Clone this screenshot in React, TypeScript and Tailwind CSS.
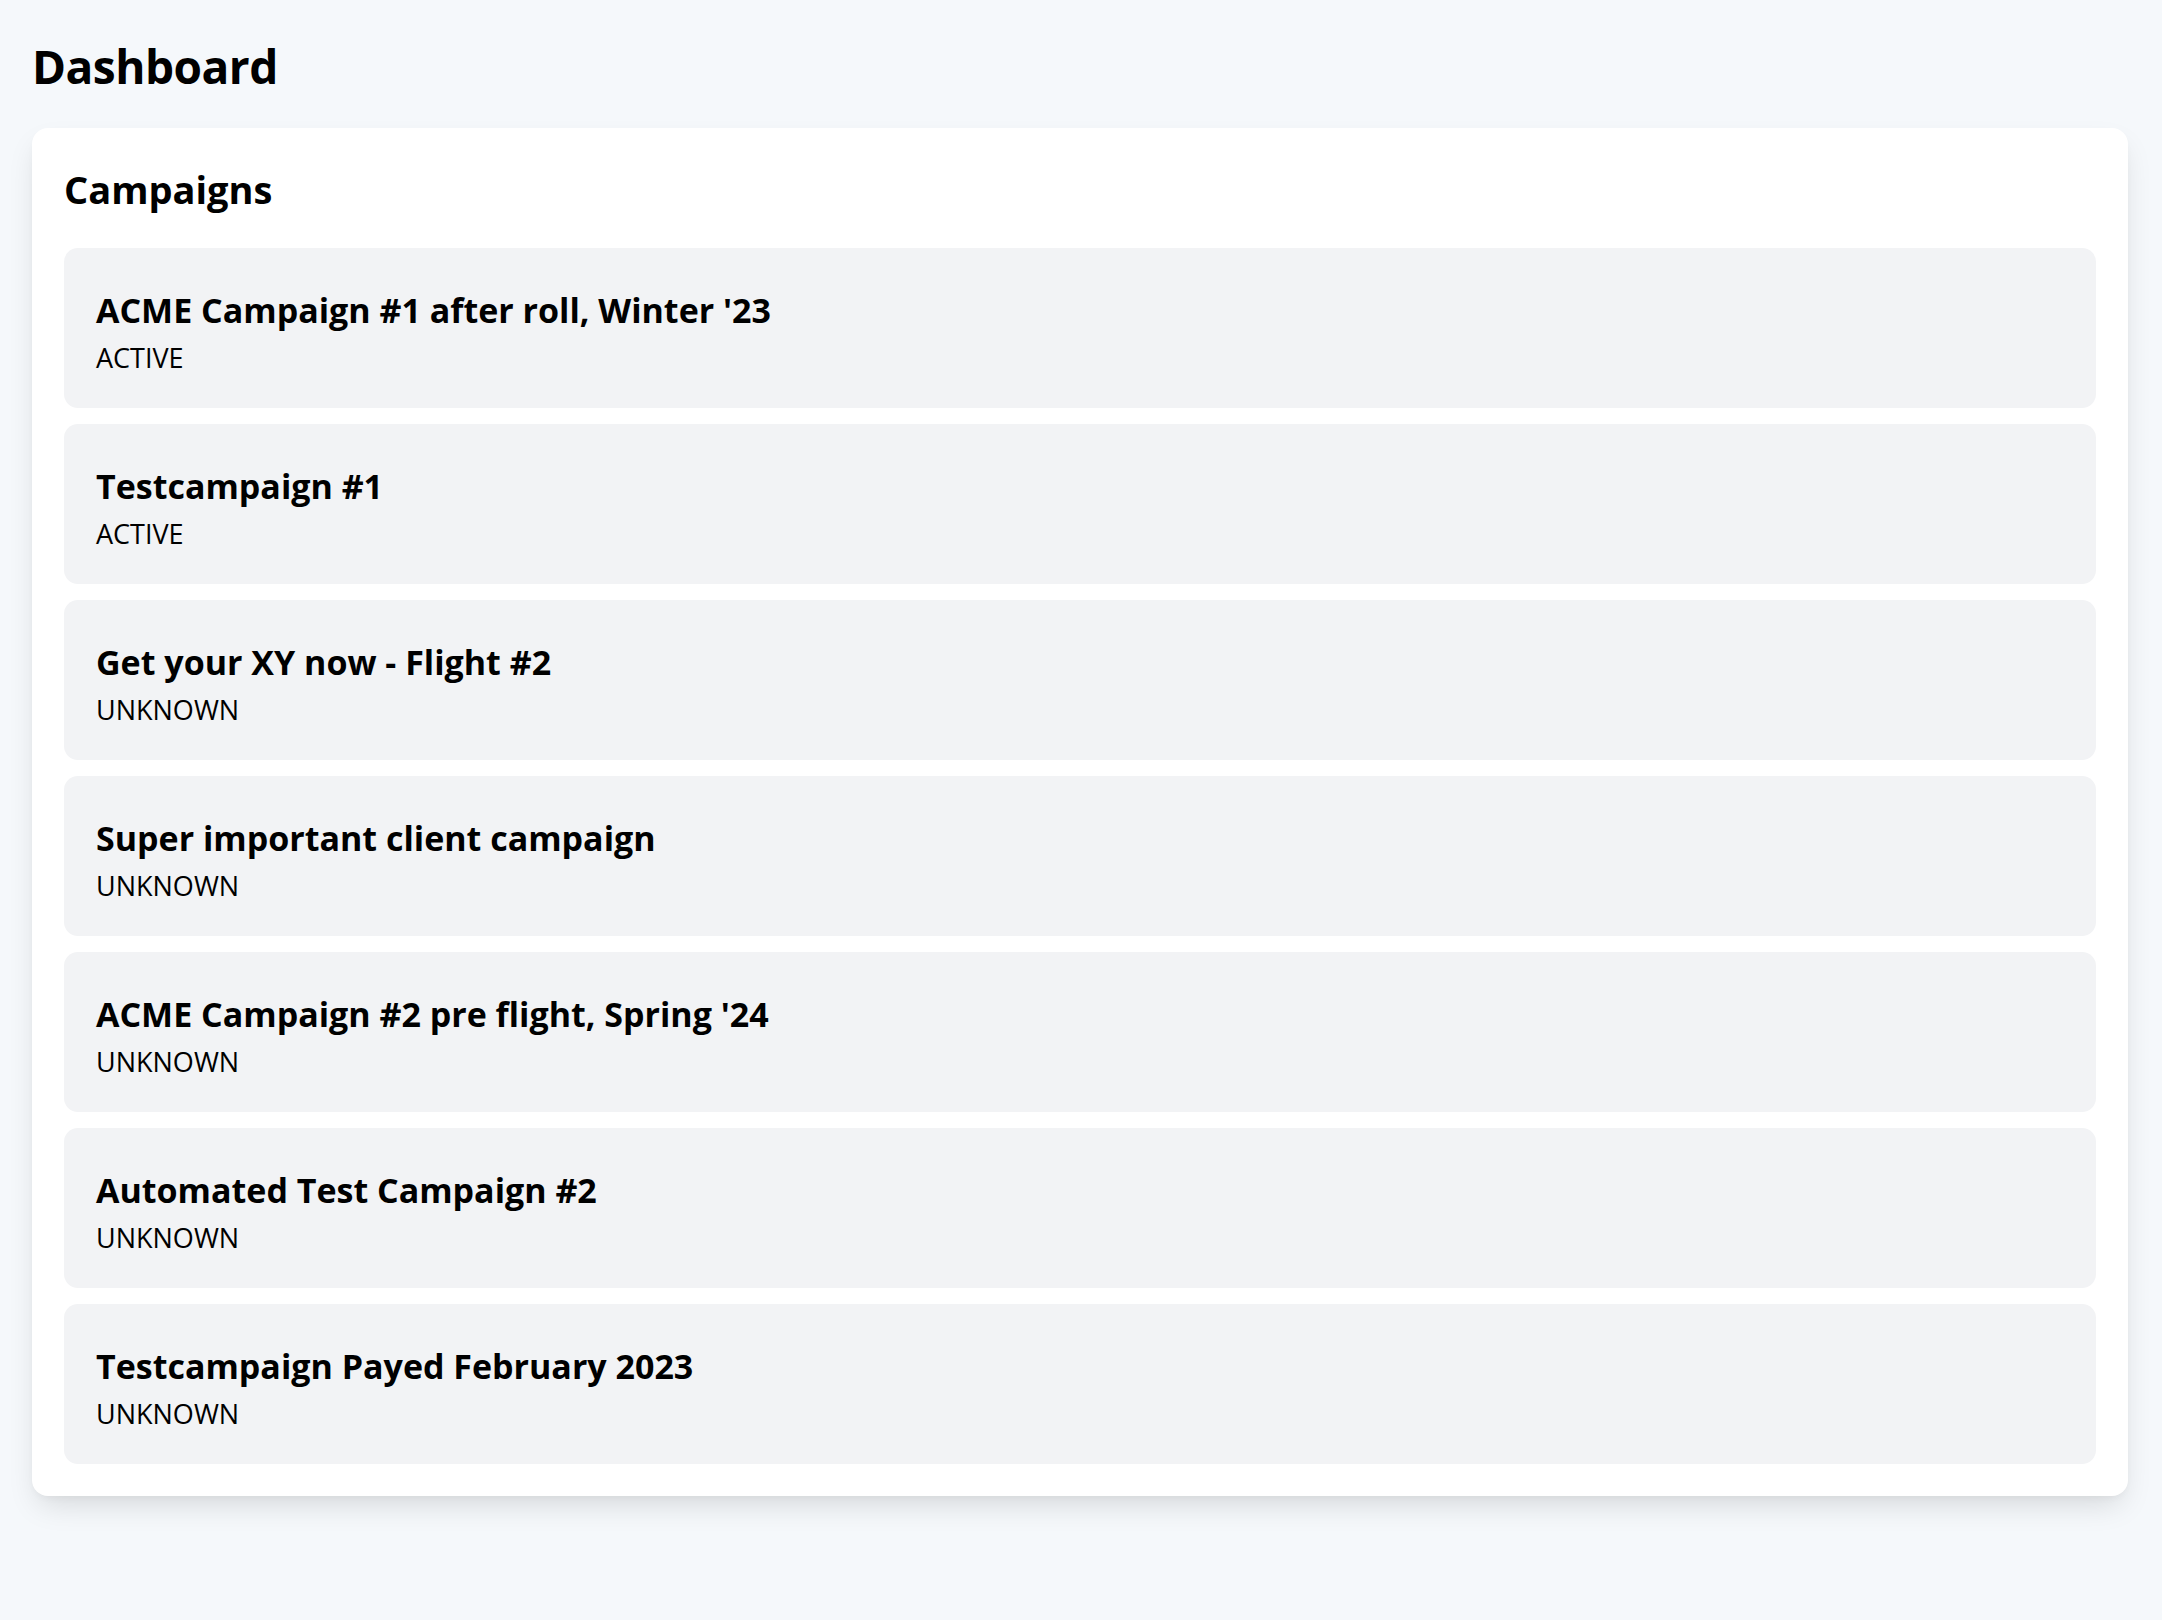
import React from "react";

const campaigns = [
  { name: "ACME Campaign #1 after roll, Winter '23", status: "ACTIVE" },
  { name: "Testcampaign #1", status: "ACTIVE" },
  { name: "Get your XY now - Flight #2", status: "UNKNOWN" },
  { name: "Super important client campaign", status: "UNKNOWN" },
  { name: "ACME Campaign #2 pre flight, Spring '24", status: "UNKNOWN" },
  { name: "Automated Test Campaign #2", status: "UNKNOWN" },
  { name: "Testcampaign Payed February 2023", status: "UNKNOWN" },
];

export default function App() {
  return (
    <div
      className="min-h-[1620px] bg-[#f5f8fb] pl-[32px] pr-[34px] pt-[32px] text-black"
      style={{ fontFamily: "'Open Sans', 'Noto Sans', sans-serif" }}
    >
      <h1 className="text-[46px] font-bold leading-[68px] tracking-[-0.5px] mb-[28px]">Dashboard</h1>
      <div className="bg-white rounded-2xl p-[32px] shadow-[0_14px_30px_-6px_rgba(0,0,0,0.13),0_4px_10px_-4px_rgba(0,0,0,0.06)]">
        <h2 className="text-[38px] font-bold leading-[58px] mb-[30px]">Campaigns</h2>
        <div className="flex flex-col gap-[16px]">
          {campaigns.map((c) => (
            <div key={c.name} className="bg-[#f2f3f5] rounded-[14px] px-[32px] py-[32px]">
              <div className="text-[34px] font-bold leading-[60px]">{c.name}</div>
              <div className="text-[27px] leading-[36px]">{c.status}</div>
            </div>
          ))}
        </div>
      </div>
    </div>
  );
}
